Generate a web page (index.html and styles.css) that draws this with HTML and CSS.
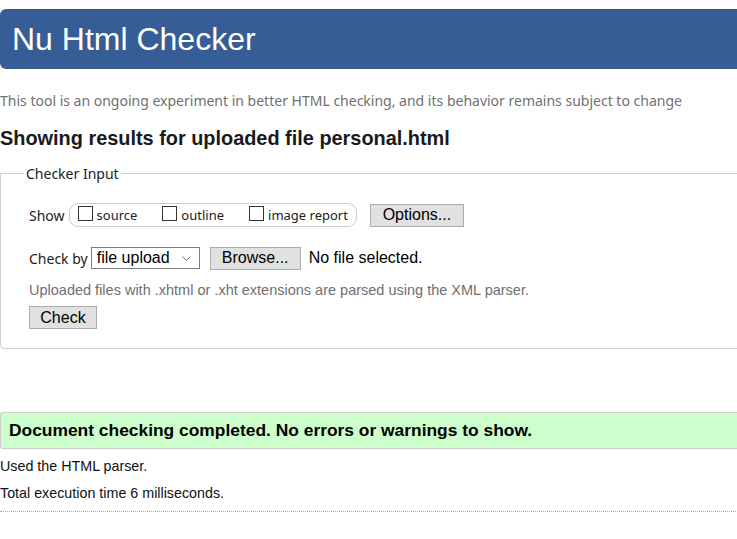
FILE: index.html
```html
<!DOCTYPE html>
<html lang="en">
<head>
<meta charset="utf-8">
<title>Nu Html Checker</title>
<link rel="stylesheet" href="styles.css">
</head>
<body>
<div class="page">
  <header class="masthead"><h1 class="title">Nu Html Checker</h1></header>
  <p class="tagline">This tool is an ongoing experiment in better HTML checking, and its behavior remains subject to change</p>
  <h2 class="results-title">Showing results for uploaded file personal.html</h2>
  <fieldset class="input-box">
    <legend class="legend">Checker Input</legend>
    <div class="row show-row">
      <span class="label">Show</span>
      <span class="pill">
        <label class="opt"><span class="cb"></span>source</label>
        <label class="opt"><span class="cb"></span>outline</label>
        <label class="opt"><span class="cb"></span>image report</label>
      </span>
      <span class="btn btn-options">Options...</span>
    </div>
    <div class="row check-row">
      <span class="label">Check by</span>
      <span class="select">file upload
        <svg class="chev" width="9" height="6" viewBox="0 0 9 6"><path d="M0.5 0.5 L4.5 4.5 L8.5 0.5" fill="none" stroke="#6d6d6d" stroke-width="1"/></svg>
      </span>
      <span class="btn btn-browse">Browse...</span>
      <span class="nofile">No file selected.</span>
    </div>
    <p class="note">Uploaded files with .xhtml or .xht extensions are parsed using the XML parser.</p>
    <span class="btn btn-check">Check</span>
  </fieldset>
  <div class="success">Document checking completed. No errors or warnings to show.</div>
  <p class="meta">Used the HTML parser.</p>
  <p class="meta">Total execution time 6 milliseconds.</p>
  <hr class="dots">
</div>
</body>
</html>
```
FILE: styles.css
```css
html, body { margin: 0; padding: 0; background: #fff; overflow: hidden; }
body { font-family: "Liberation Sans", Arial, sans-serif; color: #111; }
.page { width: 760px; }
.masthead {
  margin-top: 9px;
  height: 60px;
  background: #365d96;
  border-radius: 6px 0 0 6px;
  display: flex;
  align-items: center;
}
.title {
  margin: 0 0 0 12px;
  font-weight: normal;
  font-size: 32px;
  color: #fff;
  line-height: 1;
}
.tagline {
  margin: 23px 0 0 0;
  font-family: "Noto Sans", "Open Sans", sans-serif;
  font-size: 14px;
  color: #707070;
  line-height: 18px;
}
.results-title {
  margin: 16px 0 0 0;
  font-size: 19.9px;
  line-height: 24px;
  font-weight: bold;
  color: #1a1a1a;
}
.input-box {
  margin: 14px 0 0 0;
  padding: 17px 0 16px 28px;
  border: 1px solid #cfcfcf;
  border-radius: 0 0 0 4px;
  height: 150px;
  box-sizing: content-box;
}
.legend {
  font-family: "Noto Sans", "Open Sans", sans-serif;
  font-size: 14px;
  color: #222;
  padding: 0 2px;
  margin-left: -5px;
}
.row { display: flex; align-items: center; }
.label {
  font-family: "Noto Sans", "Open Sans", sans-serif;
  font-size: 14px;
  color: #222;
}
.show-row { margin-top: 3px; height: 24px; }
.pill {
  display: inline-flex;
  align-items: center;
  margin-left: 4px;
  height: 22px;
  padding: 0 8px 0 8px;
  border: 1px solid #cbcbcb;
  border-radius: 9px;
}
.opt {
  display: inline-flex;
  align-items: center;
  font-family: "Noto Sans", "Open Sans", sans-serif;
  font-size: 13px;
  color: #222;
  gap: 4px;
}
.opt + .opt { margin-left: 25px; }
.cb {
  width: 15px;
  height: 15px;
  border: 1px solid #333;
  box-sizing: border-box;
  margin-top: -4px;
  background: #fff;
}
.btn {
  display: inline-flex;
  align-items: center;
  justify-content: center;
  box-sizing: border-box;
  height: 23px;
  background: #e1e1e1;
  border: 1px solid #adadad;
  font-size: 16px;
  color: #000;
}
.btn-options { width: 94px; margin-left: 13px; }
.check-row { margin-top: 20px; height: 22px; }
.select {
  display: inline-flex;
  align-items: center;
  box-sizing: border-box;
  height: 22px;
  width: 109px;
  margin-left: 3px;
  padding-left: 5px;
  border: 1px solid #7a7a7a;
  font-size: 16px;
  color: #000;
  position: relative;
}
.chev { position: absolute; right: 8px; top: 8px; }
.btn-browse { width: 91px; margin-left: 10px; }
.nofile { margin-left: 8px; font-size: 16px; color: #000; }
.note {
  margin: 12px 0 0 0;
  font-size: 14.5px;
  color: #707070;
  line-height: 18px;
}
.btn-check { width: 68px; height: 23px; margin-top: 7px; margin-left: 0; }
.success {
  margin-top: 63px;
  height: 37px;
  box-sizing: border-box;
  padding-left: 8px;
  display: flex;
  align-items: center;
  background: #ccffcc;
  border-top: 1px solid #cccccc;
  border-bottom: 1px solid #cccccc;
  border-left: 1px solid #cccccc;
  border-radius: 3px 0 0 3px;
  font-weight: bold;
  font-size: 17.4px;
  color: #000;
}
.meta { margin: 8px 0 0 0; font-size: 14.3px; line-height: 18px; color: #111; }
.meta + .meta { margin-top: 9px; }
.dots { margin: 9px 0 0 0; border: 0; border-top: 1px dotted #aaa; }
```
